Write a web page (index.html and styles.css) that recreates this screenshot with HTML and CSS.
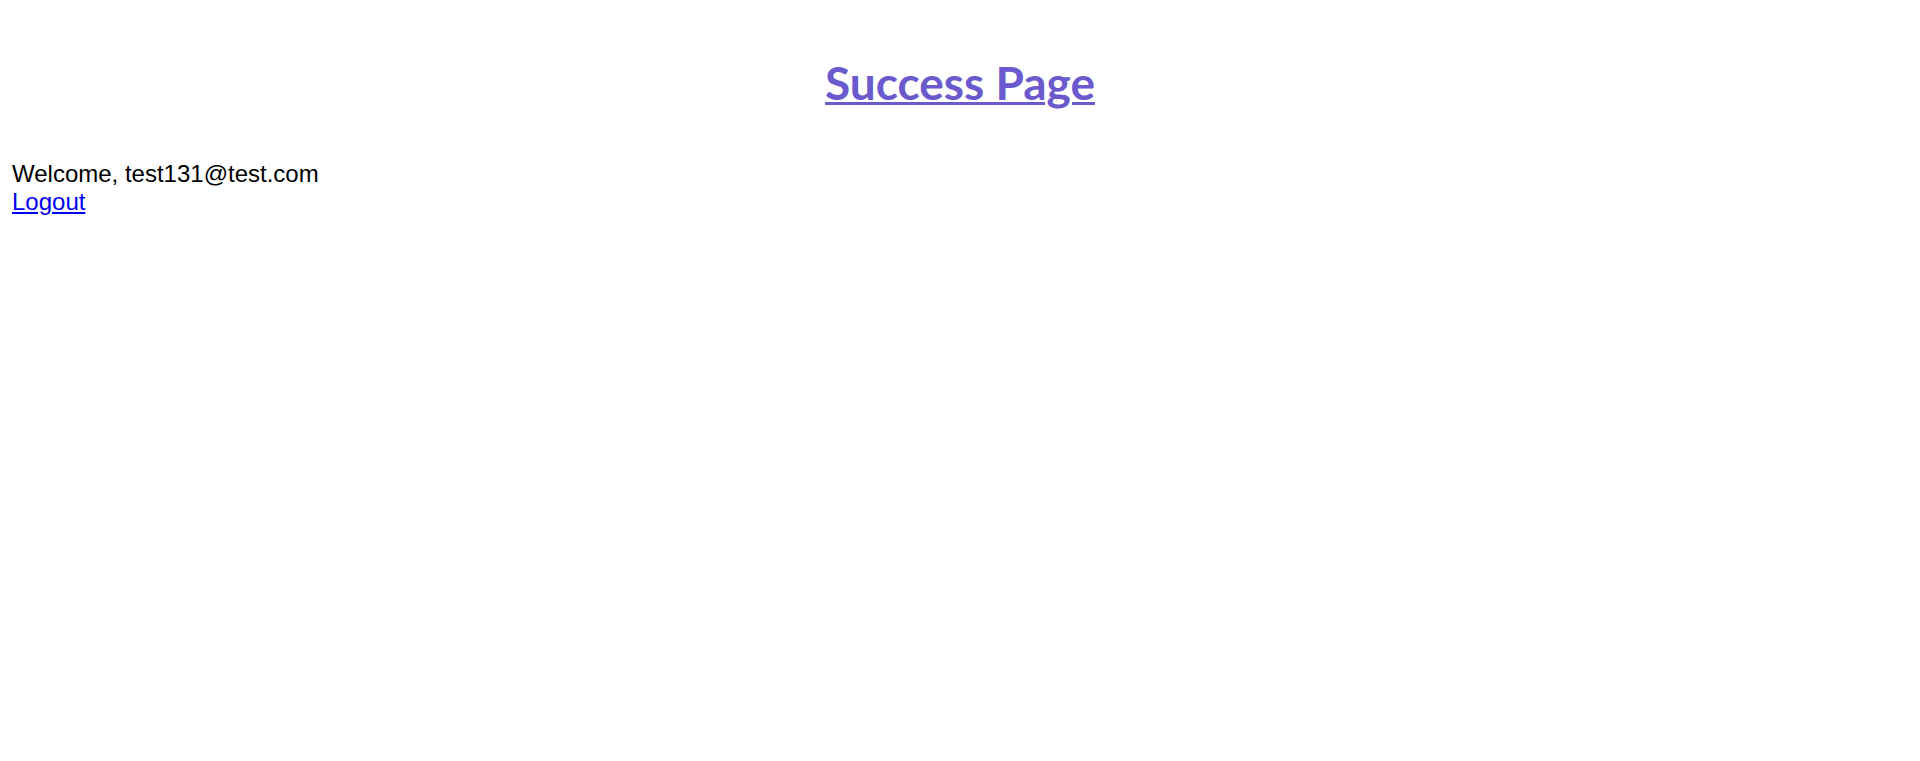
FILE: index.html
```html
<!DOCTYPE html>
<html>
<head>
<meta charset="utf-8">
<link rel="stylesheet" href="styles.css">
</head>
<body>
<h1 class="title"><a href="#" class="title-link">Success Page</a></h1>
<div class="content">
  <div class="welcome">Welcome, test131@test.com</div>
  <a href="#" class="logout">Logout</a>
</div>
</body>
</html>
```
FILE: styles.css
```css
body {
  margin: 0;
  padding: 0 12px;
  background: #fff;
  font-family: "Liberation Sans", Arial, sans-serif;
}
.title {
  text-align: center;
  margin: 55px 0 50px;
  font-family: "Lato", "Open Sans", sans-serif;
  font-size: 46px;
  font-weight: 700;
  line-height: 1.2;
}
.title-link {
  color: #6a5acd;
  text-decoration: underline;
  text-decoration-thickness: 3px;
}
.content {
  font-size: 24px;
  line-height: 28px;
  color: #000;
}
.logout {
  color: #0000ee;
}
```
